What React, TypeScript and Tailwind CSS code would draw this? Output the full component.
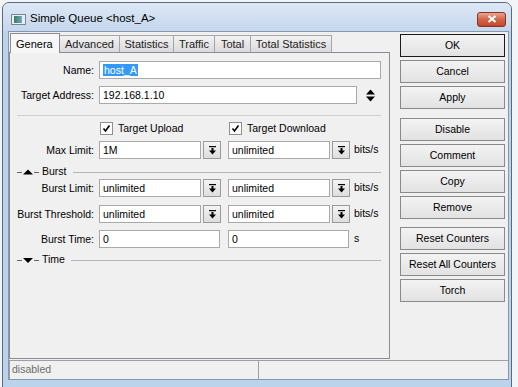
import React from "react";

const Drop = () => (
  <div className="flex h-[18px] w-[18px] items-center justify-center border border-[#9a9a9a] bg-gradient-to-b from-[#f4f4f4] to-[#dedede]">
    <svg width="7" height="9" viewBox="0 0 7 9">
      <rect x="0" y="0" width="7" height="1.2" fill="#000" />
      <rect x="2.5" y="2" width="2" height="3" fill="#000" />
      <polygon points="0,4.5 7,4.5 3.5,8.5" fill="#000" />
    </svg>
  </div>
);

const Input = ({ w, value, children }: { w: string; value?: string; children?: React.ReactNode }) => (
  <div className={`h-[18px] ${w} border border-[#a9a9a9] bg-white pl-[3px] text-[10.5px] leading-[16px] text-black whitespace-nowrap overflow-hidden`}>
    {children ?? value}
  </div>
);

const Label = ({ text }: { text: string }) => (
  <div className="w-[84px] shrink-0 text-right text-[10.5px] leading-[18px] text-black whitespace-nowrap">{text}</div>
);

const Check = ({ text }: { text: string }) => (
  <div className="flex items-center gap-[5px] text-[10.5px] text-black">
    <div className="flex h-[13px] w-[13px] items-center justify-center border border-[#8f8f8f] bg-white">
      <svg width="11" height="11" viewBox="0 0 11 11">
        <path d="M2.5 5.5 L4.5 8 L8.5 2.5" stroke="#000" strokeWidth="1.6" fill="none" />
      </svg>
    </div>
    <span>{text}</span>
  </div>
);

const Section = ({ text, up }: { text: string; up?: boolean }) => (
  <div className="ml-[7px] flex h-[12px] w-[364px] items-center">
    <svg width="22" height="12" viewBox="0 0 22 12">
      <line x1="0" y1="6.5" x2="5" y2="6.5" stroke="#666" />
      {up ? <polygon points="6,8.5 16,8.5 11,3.5" fill="#000" /> : <polygon points="6,4 16,4 11,9" fill="#000" />}
      <line x1="17" y1="6.5" x2="22" y2="6.5" stroke="#666" />
    </svg>
    <span className="ml-[3px] text-[10.5px] text-black">{text}</span>
    <div className="ml-[6px] h-px flex-1 bg-[#b5b5b5]" />
  </div>
);

const LimitRow = ({ label, a, b }: { label: string; a: string; b: string }) => (
  <div className="flex items-center">
    <Label text={label} />
    <div className="ml-[5px] flex items-center">
      <Input w="w-[102px]" value={a} />
      <div className="ml-[2px]"><Drop /></div>
      <div className="ml-[7px]"><Input w="w-[102px]" value={b} /></div>
      <div className="ml-[2px]"><Drop /></div>
      <span className="ml-[4px] text-[10.5px] text-black">bits/s</span>
    </div>
  </div>
);

const Btn = ({ text, def, extra }: { text: string; def?: boolean; extra?: string }) => (
  <div
    className={`flex h-[23px] w-[105px] items-center justify-center bg-gradient-to-b from-[#f3f3f3] to-[#e2e2e2] text-[10.5px] text-black ${
      def ? "border border-[#1a1a1a]" : "border border-[#8a8a8a]"
    } ${extra ?? ""}`}
  >
    {text}
  </div>
);

const tabs = [
  { t: "Advanced", w: "w-[61px]" },
  { t: "Statistics", w: "w-[55px]" },
  { t: "Traffic", w: "w-[42px]" },
  { t: "Total", w: "w-[37px]" },
  { t: "Total Statistics", w: "w-[82px]" },
];

export default function App() {
  return (
    <div className="h-[387px] w-[518px] overflow-hidden bg-[#f3f4f6] pl-[2px] pt-[2px] font-['Liberation_Sans',Arial,sans-serif]">
      <div className="flex h-[392px] w-[510px] flex-col rounded-t-[7px] border border-[#5a6a7e] bg-[#bcd3ec]">
        {/* title bar */}
        <div className="flex h-[28px] items-center rounded-t-[6px] bg-gradient-to-b from-[#dde8f5] to-[#c4d7ed] pl-[8px] pr-[5px] pt-[4px]">
          <div className="flex h-[11px] w-[15px] items-center border border-[#7b8490] bg-[#e9eef3] pl-[2px]">
            <div className="h-[7px] w-[8px] bg-gradient-to-r from-[#3f7d5a] to-[#6fa6c8]" />
          </div>
          <span className="ml-[4px] text-[11.5px] text-black">Simple Queue &lt;host_A&gt;</span>
          <div className="ml-auto flex h-[15px] w-[29px] items-center justify-center rounded-[3px] border border-[#8b3220] bg-gradient-to-b from-[#e8a595] via-[#d16549] to-[#c2462a]">
            <svg width="10" height="8" viewBox="0 0 10 8">
              <path d="M1.5 1 L8.5 7 M8.5 1 L1.5 7" stroke="#fff" strokeWidth="2" />
            </svg>
          </div>
        </div>

        {/* client */}
        <div className="ml-[5px] flex h-[349px] w-[501px] flex-col border border-[#8796ab] bg-[#f0f0f0]">
          <div className="flex h-[327px]">
            <div className="w-[381px]">
              <div className="flex h-[20px] items-end pl-[1px]">
                <div className="relative z-10 -mb-px flex h-[20px] w-[50px] items-start border border-b-0 border-[#898c95] bg-[#f7f7f7] pl-[5px] pt-[2px] text-[11px] text-black">
                  Genera
                </div>
                {tabs.map((tb) => (
                  <div
                    key={tb.t}
                    className={`-ml-px flex h-[17px] ${tb.w} items-center justify-center whitespace-nowrap border border-b-0 border-[#a3a5aa] bg-gradient-to-b from-[#f2f2f2] to-[#dadada] text-[11px] text-[#222]`}
                  >
                    {tb.t}
                  </div>
                ))}
              </div>
              <div className="h-[307px] border border-[#898c95] bg-[#f0f0f0]">
                <div className="mt-[8px] flex items-center">
                  <Label text="Name:" />
                  <div className="ml-[5px]">
                    <Input w="w-[282px]">
                      <span className="bg-[#3399ff] px-px text-white">host_A</span>
                    </Input>
                  </div>
                </div>
                <div className="mt-[7px] flex items-center">
                  <Label text="Target Address:" />
                  <div className="ml-[5px]">
                    <Input w="w-[258px]" value="192.168.1.10" />
                  </div>
                  <svg className="ml-[9px]" width="9" height="13" viewBox="0 0 9 13">
                    <polygon points="0,5.5 9,5.5 4.5,0.5" fill="#000" />
                    <polygon points="0,7.5 9,7.5 4.5,12.5" fill="#000" />
                  </svg>
                </div>
                <div className="ml-[7px] mt-[11px] h-px w-[364px] bg-[#cfcfcf]" />
                <div className="mt-[6px] flex h-[13px] items-center">
                  <div className="w-[90px]" />
                  <div className="w-[129px]">
                    <Check text="Target Upload" />
                  </div>
                  <Check text="Target Download" />
                </div>
                <div className="mt-[6px]">
                  <LimitRow label="Max Limit:" a="1M" b="unlimited" />
                </div>
                <div className="mt-[7px]">
                  <Section text="Burst" up />
                </div>
                <div className="mt-px">
                  <LimitRow label="Burst Limit:" a="unlimited" b="unlimited" />
                </div>
                <div className="mt-[8px]">
                  <LimitRow label="Burst Threshold:" a="unlimited" b="unlimited" />
                </div>
                <div className="mt-[7px] flex items-center">
                  <Label text="Burst Time:" />
                  <div className="ml-[5px] flex items-center">
                    <Input w="w-[121px]" value="0" />
                    <div className="ml-[8px]">
                      <Input w="w-[121px]" value="0" />
                    </div>
                    <span className="ml-[5px] text-[10.5px] text-black">s</span>
                  </div>
                </div>
                <div className="mt-[6px]">
                  <Section text="Time" />
                </div>
              </div>
            </div>

            <div className="ml-[10px] flex w-[105px] flex-col gap-[3px] pt-[2px]">
              <Btn text="OK" def />
              <Btn text="Cancel" />
              <Btn text="Apply" />
              <Btn text="Disable" extra="mt-[6px]" />
              <Btn text="Comment" />
              <Btn text="Copy" />
              <Btn text="Remove" />
              <Btn text="Reset Counters" extra="mt-[5px]" />
              <Btn text="Reset All Counters" />
              <Btn text="Torch" />
            </div>
          </div>

          <div className="mt-px flex h-[19px]">
            <div className="flex w-[249px] items-center border-l border-t border-[#a0a0a0] pl-[2px] text-[10.5px] text-[#6d6d6d]">
              disabled
            </div>
            <div className="w-[250px] border-l border-t border-[#a0a0a0]" />
          </div>
        </div>
      </div>
    </div>
  );
}
